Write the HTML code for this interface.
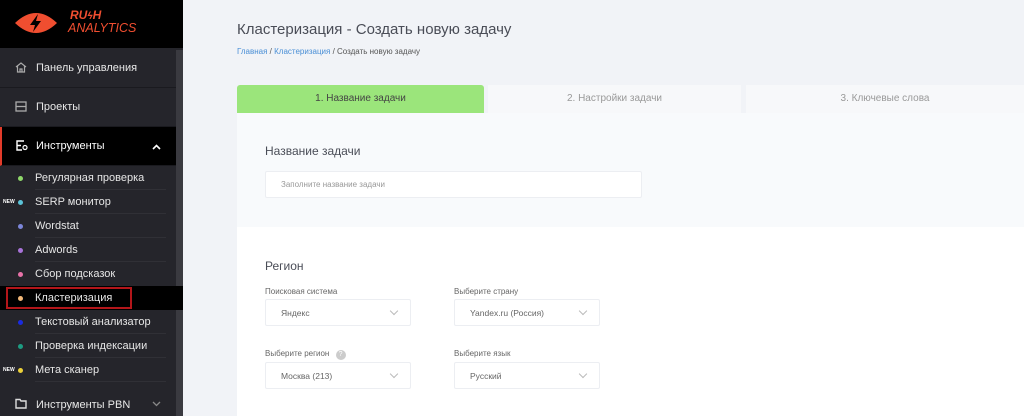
<!DOCTYPE html>
<html><head><meta charset="utf-8"><style>
*{margin:0;padding:0;box-sizing:border-box}
html,body{width:1024px;height:416px;overflow:hidden}
body{background:#f1f3f7;font-family:"Liberation Sans","DejaVu Sans",sans-serif;position:relative}
.sb{position:absolute;left:0;top:0;width:183px;height:416px;background:#25252b}
.logo{position:absolute;left:0;top:0;width:183px;height:48px;background:#000}
.scroll{position:absolute;left:176px;top:50px;width:7px;height:366px;background:#3a3a40}
.sect{position:absolute;left:0;width:176px;height:39px;color:#e8e8e8;font-size:11px;display:flex;align-items:center;padding-left:36px;border-bottom:1px solid #1a1a1f}
.ic{position:absolute;left:15px;top:13px;width:12px;height:11px}
.sub{position:absolute;left:0;width:176px;height:24px;color:#e6e6e6;font-size:11px;line-height:25px;padding-left:35px}
.sub .d{position:absolute;left:18px;top:10px;width:5px;height:5px;border-radius:50%}
.sub .ln{position:absolute;left:35px;right:10px;bottom:0;border-bottom:1px solid #303036}
.new{position:absolute;left:3px;top:0;font-size:5px;font-weight:bold;color:#fff}
.main{position:absolute;left:183px;top:0;right:0;bottom:0}
h1{position:absolute;left:54px;top:21px;font-size:15px;font-weight:normal;color:#4a4d57}
.bc{position:absolute;left:54px;top:47px;font-size:8px;color:#555}
.bc a{color:#4a8fd6}
.tab{position:absolute;top:85px;height:28px;font-size:10px;line-height:28px;text-align:center;color:#999;background:#f7f8fa}
.p1{position:absolute;left:54px;top:113px;right:0;height:114px;background:#f8fafc}
.p2{position:absolute;left:54px;top:227px;right:0;height:189px;background:#fff}
.lbl{position:absolute;font-size:8px;color:#666}
.inp{position:absolute;background:#fff;border:1px solid #eceef2;border-radius:2px;font-size:8.5px;color:#666;padding-left:15px;display:flex;align-items:center}
.ch{position:absolute;right:13px;top:8px;width:6px;height:6px;border-right:1px solid #bbb;border-bottom:1px solid #bbb;transform:rotate(45deg)}
</style></head><body>
<div class="sb">
 <div class="logo">
  <svg style="position:absolute;left:14px;top:9px" width="44" height="28" viewBox="0 0 44 28"><path d="M1 14 Q22 -6 43 14 Q22 34 1 14Z" fill="#f04e30"/><path d="M24 5 L16 16 L21 16 L19 23 L27 12 L22 12 Z" fill="#000"/></svg>
  <div style="position:absolute;left:70px;top:10px;color:#f04e30;font-size:12px;font-weight:bold;font-style:italic;line-height:11px">RU<span style="font-size:10px">ϟ</span>H</div>
  <div style="position:absolute;left:68px;top:22px;color:#f04e30;font-size:12.5px;font-style:italic;line-height:13px">ANALYTICS</div>
 </div>
 <div class="scroll"></div>
 <div class="sect" style="top:49px"><svg class="ic" viewBox="0 0 12 11"><path d="M1 5 L6 1 L11 5 M2.5 4 V10 H9.5 V4 M5 10 V7 H7 V10" fill="none" stroke="#aaa" stroke-width="1.2"/></svg>Панель управления</div>
 <div class="sect" style="top:88px"><svg class="ic" viewBox="0 0 12 11"><rect x="1" y="1" width="10" height="9" fill="none" stroke="#aaa" stroke-width="1.3"/><path d="M1 5.5H11" stroke="#aaa" stroke-width="1.3"/></svg>Проекты</div>
 <div class="sect" style="top:127px;background:#000;border-left:2px solid #e23b2a;padding-left:34px;font-size:11px;color:#fff"><svg class="ic" style="left:14px" viewBox="0 0 12 11"><path d="M8 1H1V10H6 M1 5.5H5" fill="none" stroke="#fff" stroke-width="1.4"/><circle cx="9" cy="7.5" r="2" fill="none" stroke="#fff" stroke-width="1.2"/></svg>Инструменты<svg style="position:absolute;left:150px;top:17px" width="9" height="6" viewBox="0 0 9 6"><path d="M1 5L4.5 1.5L8 5" fill="none" stroke="#fff" stroke-width="1.6"/></svg></div>
 <div class="sub" style="top:166px"><span class="d" style="background:#8fd86a"></span>Регулярная проверка<span class="ln"></span></div>
 <div class="sub" style="top:190px"><span class="new">NEW</span><span class="d" style="background:#5bc3d8"></span>SERP монитор<span class="ln"></span></div>
 <div class="sub" style="top:214px"><span class="d" style="background:#7c86d9"></span>Wordstat<span class="ln"></span></div>
 <div class="sub" style="top:238px"><span class="d" style="background:#a873d9"></span>Adwords<span class="ln"></span></div>
 <div class="sub" style="top:262px"><span class="d" style="background:#e872a8"></span>Сбор подсказок</div>
 <div class="sub" style="top:286px;background:#000;width:183px"><span class="d" style="background:#f3b97a"></span>Кластеризация<span style="position:absolute;left:6px;top:1px;width:126px;height:22px;border:2px solid #b3161a"></span></div>
 <div class="sub" style="top:310px"><span class="d" style="background:#1a2be0"></span>Текстовый анализатор<span class="ln"></span></div>
 <div class="sub" style="top:334px"><span class="d" style="background:#1d9c82"></span>Проверка индексации<span class="ln"></span></div>
 <div class="sub" style="top:358px"><span class="new">NEW</span><span class="d" style="background:#ecd13a"></span>Мета сканер<span class="ln"></span></div>
 <div class="sect" style="top:385px;border:none"><svg class="ic" viewBox="0 0 12 11"><path d="M1 1.5H5L6 3H11V10H1Z" fill="none" stroke="#ddd" stroke-width="1.4"/></svg>Инструменты PBN<svg style="position:absolute;left:152px;top:16px" width="9" height="6" viewBox="0 0 9 6"><path d="M1 1L4.5 4.5L8 1" fill="none" stroke="#888" stroke-width="1.3"/></svg></div>
</div>
<div class="main">
 <h1>Кластеризация - Создать новую задачу</h1>
 <div class="bc"><a>Главная</a> / <a>Кластеризация</a> / Создать новую задачу</div>
 <div class="tab" style="left:54px;width:247px;background:#9be57b;color:#444;border-radius:3px 3px 0 0">1. Название задачи</div>
 <div class="tab" style="left:305px;width:253px">2. Настройки задачи</div>
 <div class="tab" style="left:563px;right:0">3. Ключевые слова</div>
 <div class="p1"></div>
 <div class="p2"></div>
 <div style="position:absolute;left:82px;top:144px;font-size:12px;color:#4a4d57">Название задачи</div>
 <div class="inp" style="left:82px;top:171px;width:377px;height:27px;color:#999;font-size:8px">Заполните название задачи</div>
 <div style="position:absolute;left:82px;top:259px;font-size:12px;color:#4a4d57">Регион</div>
 <div class="lbl" style="left:82px;top:287px">Поисковая система</div>
 <div class="lbl" style="left:271px;top:287px">Выберите страну</div>
 <div class="inp" style="left:82px;top:299px;width:146px;height:27px">Яндекс<span class="ch"></span></div>
 <div class="inp" style="left:271px;top:299px;width:146px;height:27px">Yandex.ru (Россия)<span class="ch"></span></div>
 <div class="lbl" style="left:82px;top:349px">Выберите регион <span style="display:inline-block;width:10px;height:10px;border-radius:50%;background:#ccc;color:#fff;font-size:7px;text-align:center;line-height:10px;margin-left:4px">?</span></div>
 <div class="lbl" style="left:271px;top:349px">Выберите язык</div>
 <div class="inp" style="left:82px;top:362px;width:146px;height:27px">Москва (213)<span class="ch"></span></div>
 <div class="inp" style="left:271px;top:362px;width:146px;height:27px">Русский<span class="ch"></span></div>
</div>
</body></html>
